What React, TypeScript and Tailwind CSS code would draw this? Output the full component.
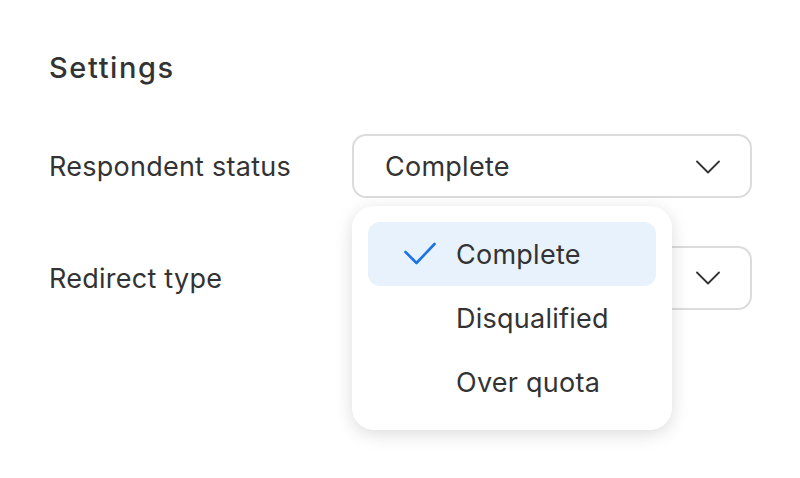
export default function App() {
  const options = ["Complete", "Disqualified", "Over quota"];
  const selected = "Complete";

  const Chevron = () => (
    <svg width="24" height="14" viewBox="0 0 24 14" fill="none" className="shrink-0">
      <path d="M1 1.5 L12 12.5 L23 1.5" stroke="#333333" strokeWidth="1.8" strokeLinecap="round" strokeLinejoin="round" />
    </svg>
  );

  return (
    <div className="w-[800px] h-[478px] bg-white text-[#333333] font-['Inter',sans-serif] tracking-[0.25px] pl-[49px] pr-[48px] pt-[48px]">
      <h2 className="text-[29px] font-medium leading-[40px] tracking-[1.6px]">Settings</h2>

      <div className="mt-[46px] grid grid-cols-[303px_1fr] gap-y-[48px] items-center">
        <div className="text-[27px] leading-[32px] pt-[2px]">Respondent status</div>
        <div className="relative">
          <button className="w-full h-[64px] flex items-center justify-between rounded-[14px] border-2 border-[#dcdcdc] bg-white pl-[31px] pr-[30px] pt-[2px] text-[27px]">
            <span>{selected}</span>
            <Chevron />
          </button>

          {/* open menu */}
          <div className="absolute left-0 top-[72px] z-10 w-[320px] rounded-[22px] bg-white p-4 shadow-[0_4px_18px_rgba(0,0,0,0.14)]">
            {options.map((o) => (
              <div
                key={o}
                className={`h-[64px] flex items-center rounded-[12px] text-[27px] ${o === selected ? "bg-[#e8f2fc]" : ""}`}
              >
                <div className="w-[88px] shrink-0 pl-[36px]">
                  {o === selected && (
                    <svg width="32" height="24" viewBox="0 0 32 24" fill="none">
                      <path d="M1.5 10 L12.5 21 L30.5 2" stroke="#1a73e8" strokeWidth="2.6" strokeLinecap="round" strokeLinejoin="round" />
                    </svg>
                  )}
                </div>
                <span className="pt-[2px]">{o}</span>
              </div>
            ))}
          </div>
        </div>

        <div className="text-[27px] leading-[32px] pt-[2px]">Redirect type</div>
        <button className="w-full h-[64px] flex items-center justify-end rounded-[14px] border-2 border-[#dcdcdc] bg-white pl-[31px] pr-[30px] text-[27px]">
          <Chevron />
        </button>
      </div>
    </div>
  );
}
